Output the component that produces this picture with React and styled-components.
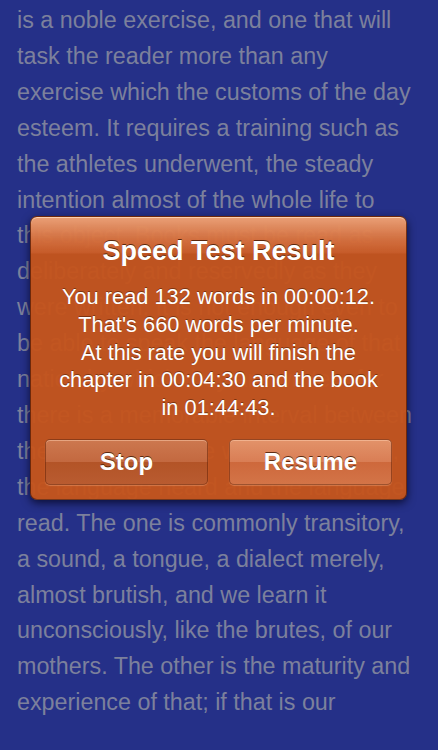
import React from "react";
import styled, { createGlobalStyle } from "styled-components";

const GlobalStyle = createGlobalStyle`
  html, body {
    margin: 0;
    padding: 0;
    background: #253088;
  }
  body {
    font-family: "Liberation Sans", Arial, Helvetica, sans-serif;
  }
`;

const Page = styled.div`
  position: relative;
  width: 438px;
  height: 750px;
  overflow: hidden;
  background: #253088;
`;

const Reader = styled.div`
  padding: 3px 0 0 17px;
  font-size: 23.3px;
  line-height: 35.9px;
  color: #7c809c;
  white-space: nowrap;
`;

const Line = styled.div``;

const Alert = styled.div`
  position: absolute;
  left: 30px;
  top: 216px;
  width: 377px;
  height: 284px;
  box-sizing: border-box;
  padding: 14px;
  border-radius: 7px;
  border: 1px solid rgba(90, 30, 5, 0.8);
  background:
    linear-gradient(
      to bottom,
      rgba(245, 180, 140, 0.8) 0px,
      rgba(230, 140, 95, 0.5) 22px,
      rgba(215, 110, 60, 0.3) 36px,
      rgba(200, 86, 30, 0) 37px
    ),
    rgba(197, 84, 28, 0.96);
  box-shadow: 0 3px 8px rgba(0, 0, 20, 0.7), inset 0 1px 0 rgba(255, 220, 190, 0.8);
  display: flex;
  flex-direction: column;
  align-items: center;
  color: #fff;
`;

const Title = styled.div`
  font-size: 27px;
  font-weight: bold;
  line-height: 30px;
  margin-top: 5px;
  text-shadow: 0 -1px 0 rgba(60, 20, 0, 0.8);
`;

const Message = styled.div`
  margin-top: 17px;
  font-size: 21.8px;
  line-height: 27.8px;
  text-align: center;
  white-space: nowrap;
  text-shadow: 0 -1px 0 rgba(60, 20, 0, 0.5);
`;

const Buttons = styled.div`
  margin-top: auto;
  width: 100%;
  display: flex;
  justify-content: space-between;
`;

const Button = styled.button`
  width: 163px;
  height: 46px;
  border-radius: 5px;
  border: 1px solid rgba(110, 40, 10, 0.6);
  font-family: inherit;
  font-size: 24px;
  font-weight: bold;
  color: #fff;
  text-shadow: 0 -1px 0 rgba(60, 20, 0, 0.8);
  box-shadow: 0 1px 1px rgba(255, 190, 150, 0.35), inset 0 1px 0 rgba(255, 210, 180, 0.5);
  background: ${({ $primary }) =>
    $primary
      ? "linear-gradient(to bottom, rgba(228,150,110,0.95) 0%, rgba(218,128,88,0.95) 50%, rgba(206,106,62,0.95) 51%, rgba(212,118,74,0.95) 100%)"
      : "linear-gradient(to bottom, rgba(205,122,82,0.95) 0%, rgba(195,106,66,0.95) 50%, rgba(178,84,40,0.95) 51%, rgba(184,92,50,0.95) 100%)"};
  padding: 0;
`;

const lines = [
  "is a noble exercise, and one that will",
  "task the reader more than any",
  "exercise which the customs of the day",
  "esteem. It requires a training such as",
  "the athletes underwent, the steady",
  "intention almost of the whole life to",
  "this object. Books must be read as",
  "deliberately and reservedly as they",
  "were written. It is not enough even to",
  "be able to speak the language of that",
  "nation by which they are written, for",
  "there is a memorable interval between",
  "the spoken and the written language,",
  "the language heard and the language",
  "read. The one is commonly transitory,",
  "a sound, a tongue, a dialect merely,",
  "almost brutish, and we learn it",
  "unconsciously, like the brutes, of our",
  "mothers. The other is the maturity and",
  "experience of that; if that is our",
];

export default function App() {
  return (
    <Page>
      <GlobalStyle />
      <Reader>
        {lines.map((l, i) => (
          <Line key={i}>{l}</Line>
        ))}
      </Reader>
      <Alert>
        <Title>Speed Test Result</Title>
        <Message>
          You read 132 words in 00:00:12.
          <br />
          That's 660 words per minute.
          <br />
          At this rate you will finish the
          <br />
          chapter in 00:04:30 and the book
          <br />
          in 01:44:43.
        </Message>
        <Buttons>
          <Button>Stop</Button>
          <Button $primary>Resume</Button>
        </Buttons>
      </Alert>
    </Page>
  );
}
